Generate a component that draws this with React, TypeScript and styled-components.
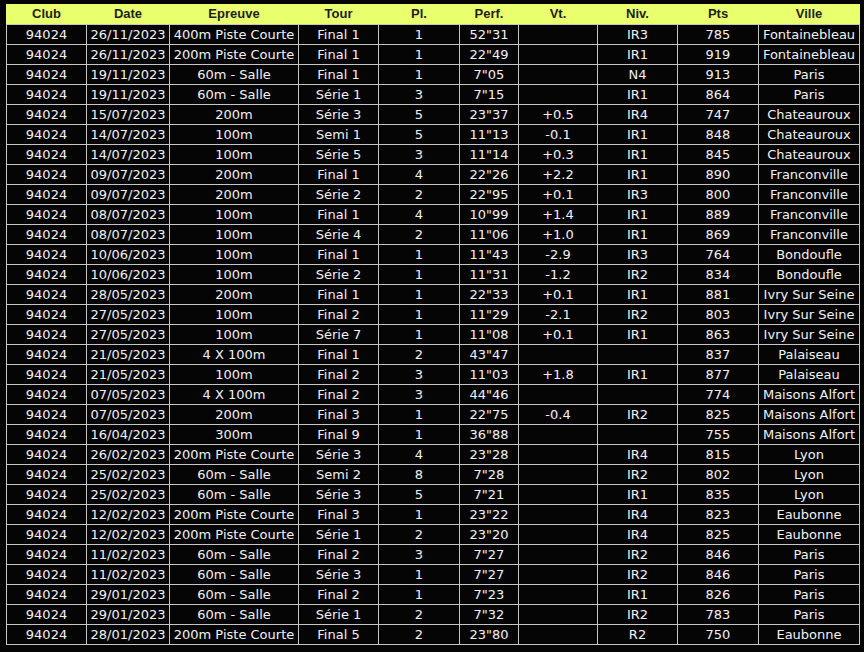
import React from "react";
import styled, { createGlobalStyle } from "styled-components";

const GlobalStyle = createGlobalStyle`
  html, body {
    margin: 0;
    padding: 0;
    background: #050505;
  }
`;

const COLS = "79px 82px 128px 79px 80px 58px 78px 79px 80px 100px";

const Page = styled.div`
  padding: 4px 0 0 6px;
`;

const HeaderRow = styled.div`
  display: grid;
  grid-template-columns: ${COLS};
  column-gap: 1px;
  padding: 0 1px;
  width: 854px;
  height: 20px;
  box-sizing: border-box;
  background: #eaff6e;
`;

const HeaderCell = styled.div`
  font-family: "Liberation Sans", Arial, sans-serif;
  font-weight: bold;
  font-size: 13px;
  line-height: 20px;
  color: #1e1e1e;
  text-align: center;
  white-space: nowrap;
`;

const Body = styled.div`
  display: grid;
  grid-template-columns: ${COLS};
  gap: 1px;
  padding: 1px;
  width: 854px;
  box-sizing: border-box;
  background: #c6c6c6;
`;

const Row = styled.div`
  display: contents;
`;

const Cell = styled.div`
  background: #050505;
  color: #f2f2f2;
  font-family: "DejaVu Sans", Verdana, sans-serif;
  font-size: 13px;
  line-height: 19px;
  height: 19px;
  text-align: center;
  white-space: nowrap;
  overflow: hidden;
`;

const headers = ["Club", "Date", "Epreuve", "Tour", "Pl.", "Perf.", "Vt.", "Niv.", "Pts", "Ville"];

type R = [string, string, string, string, string, string, string, string, string];

const rows: R[] = [
  ["26/11/2023", "400m Piste Courte", "Final 1", "1", "52\"31", "", "IR3", "785", "Fontainebleau"],
  ["26/11/2023", "200m Piste Courte", "Final 1", "1", "22\"49", "", "IR1", "919", "Fontainebleau"],
  ["19/11/2023", "60m - Salle", "Final 1", "1", "7\"05", "", "N4", "913", "Paris"],
  ["19/11/2023", "60m - Salle", "Série 1", "3", "7\"15", "", "IR1", "864", "Paris"],
  ["15/07/2023", "200m", "Série 3", "5", "23\"37", "+0.5", "IR4", "747", "Chateauroux"],
  ["14/07/2023", "100m", "Semi 1", "5", "11\"13", "-0.1", "IR1", "848", "Chateauroux"],
  ["14/07/2023", "100m", "Série 5", "3", "11\"14", "+0.3", "IR1", "845", "Chateauroux"],
  ["09/07/2023", "200m", "Final 1", "4", "22\"26", "+2.2", "IR1", "890", "Franconville"],
  ["09/07/2023", "200m", "Série 2", "2", "22\"95", "+0.1", "IR3", "800", "Franconville"],
  ["08/07/2023", "100m", "Final 1", "4", "10\"99", "+1.4", "IR1", "889", "Franconville"],
  ["08/07/2023", "100m", "Série 4", "2", "11\"06", "+1.0", "IR1", "869", "Franconville"],
  ["10/06/2023", "100m", "Final 1", "1", "11\"43", "-2.9", "IR3", "764", "Bondoufle"],
  ["10/06/2023", "100m", "Série 2", "1", "11\"31", "-1.2", "IR2", "834", "Bondoufle"],
  ["28/05/2023", "200m", "Final 1", "1", "22\"33", "+0.1", "IR1", "881", "Ivry Sur Seine"],
  ["27/05/2023", "100m", "Final 2", "1", "11\"29", "-2.1", "IR2", "803", "Ivry Sur Seine"],
  ["27/05/2023", "100m", "Série 7", "1", "11\"08", "+0.1", "IR1", "863", "Ivry Sur Seine"],
  ["21/05/2023", "4 X 100m", "Final 1", "2", "43\"47", "", "", "837", "Palaiseau"],
  ["21/05/2023", "100m", "Final 2", "3", "11\"03", "+1.8", "IR1", "877", "Palaiseau"],
  ["07/05/2023", "4 X 100m", "Final 2", "3", "44\"46", "", "", "774", "Maisons Alfort"],
  ["07/05/2023", "200m", "Final 3", "1", "22\"75", "-0.4", "IR2", "825", "Maisons Alfort"],
  ["16/04/2023", "300m", "Final 9", "1", "36\"88", "", "", "755", "Maisons Alfort"],
  ["26/02/2023", "200m Piste Courte", "Série 3", "4", "23\"28", "", "IR4", "815", "Lyon"],
  ["25/02/2023", "60m - Salle", "Semi 2", "8", "7\"28", "", "IR2", "802", "Lyon"],
  ["25/02/2023", "60m - Salle", "Série 3", "5", "7\"21", "", "IR1", "835", "Lyon"],
  ["12/02/2023", "200m Piste Courte", "Final 3", "1", "23\"22", "", "IR4", "823", "Eaubonne"],
  ["12/02/2023", "200m Piste Courte", "Série 1", "2", "23\"20", "", "IR4", "825", "Eaubonne"],
  ["11/02/2023", "60m - Salle", "Final 2", "3", "7\"27", "", "IR2", "846", "Paris"],
  ["11/02/2023", "60m - Salle", "Série 3", "1", "7\"27", "", "IR2", "846", "Paris"],
  ["29/01/2023", "60m - Salle", "Final 2", "1", "7\"23", "", "IR1", "826", "Paris"],
  ["29/01/2023", "60m - Salle", "Série 1", "2", "7\"32", "", "IR2", "783", "Paris"],
  ["28/01/2023", "200m Piste Courte", "Final 5", "2", "23\"80", "", "R2", "750", "Eaubonne"],
];

export default function App() {
  return (
    <>
      <GlobalStyle />
      <Page>
        <HeaderRow>
          {headers.map((h) => (
            <HeaderCell key={h}>{h}</HeaderCell>
          ))}
        </HeaderRow>
        <Body>
          {rows.map((r, i) => (
            <Row key={i}>
              <Cell>94024</Cell>
              {r.map((v, j) => (
                <Cell key={j}>{v}</Cell>
              ))}
            </Row>
          ))}
        </Body>
      </Page>
    </>
  );
}
